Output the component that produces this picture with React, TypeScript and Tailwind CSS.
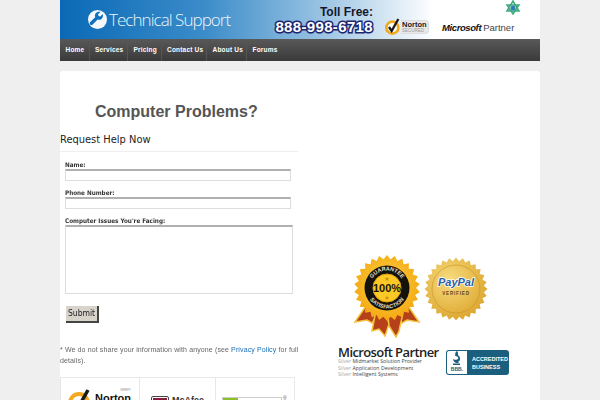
const sans = "font-['Liberation_Sans',Arial,sans-serif]";
const cond = "font-['DejaVu_Sans_Condensed','DejaVu_Sans',sans-serif]";

const navItems = [
  { label: "Home", w: "w-[29.5px]" },
  { label: "Services", w: "w-[38.5px]" },
  { label: "Pricing", w: "w-[33.5px]" },
  { label: "Contact Us", w: "w-[45.500px]" },
  { label: "About Us", w: "w-[40px]" },
  { label: "Forums", w: "w-[40px]" },
];

function starburst(cx: number, cy: number, outer: number, inner: number, n: number) {
  const pts: string[] = [];
  for (let i = 0; i < n * 2; i++) {
    const r = i % 2 === 0 ? outer : inner;
    const a = (Math.PI * i) / n;
    pts.push(`${(cx + r * Math.sin(a)).toFixed(2)},${(cy - r * Math.cos(a)).toFixed(2)}`);
  }
  return pts.join(" ");
}

function WrenchLogo() {
  return (
    <svg width="19" height="19" viewBox="0 0 24 24" className="shrink-0">
      <circle cx="12" cy="12" r="12" fill="#f4f8fc" />
      <path
        d="M18.6 5.2l-3 3-2.3-.6-.6-2.2 3-3c-2.300-.7-4.700 0-6 1.800-1.100 1.500-1.200 3.300-.6 4.800l-6.300 6.300c-.9.9-.9 2.300 0 3.100.9.9 2.300.9 3.100 0l6.300-6.300c1.600.6 3.500.4 4.900-.8 1.700-1.400 2.300-3.800 1.500-6.100z"
        fill="#1170bb"
      />
    </svg>
  );
}

function NortonCheck({ size = 17 }: { size?: number }) {
  return (
    <svg width={size} height={size} viewBox="0 0 24 24" className="shrink-0 overflow-visible">
      <circle cx="11" cy="13" r="9" fill="#fff" stroke="#f2a91f" strokeWidth="4" />
      <path d="M6 12l4 6L20 0" fill="none" stroke="#1a1a1a" strokeWidth="3.500" />
    </svg>
  );
}

function GuaranteeSeal() {
  return (
    <svg width="70" height="86" viewBox="0 0 70 86">
      <defs>
        <radialGradient id="gold" cx="50%" cy="45%" r="60%">
          <stop offset="0%" stopColor="#ffd84a" />
          <stop offset="100%" stopColor="#f2a20c" />
        </radialGradient>
      </defs>
      <path d="M16 48L3 67l12-2 5 3 7-10z" fill="#b5401a" stroke="#f3c23c" strokeWidth="1.500" />
      <path d="M54 48l13 19-12-2-5 3-7-10z" fill="#b5401a" stroke="#f3c23c" strokeWidth="1.500" />
      <path d="M24 55l-4 21 7-2 6 7 4-12-3-12z" fill="#b5401a" stroke="#f3c23c" strokeWidth="1.500" />
      <path d="M36 60l1 11 7 11 3-6 4-18z" fill="#b5401a" stroke="#f3c23c" strokeWidth="1.500" />
      <polygon points={starburst(35, 33, 33, 29, 26)} fill="url(#gold)" />
      <circle cx="35" cy="33" r="22.500" fill="#15120c" />
      <circle cx="35" cy="33" r="14" fill="#fdc926" stroke="#e0a011" strokeWidth="1" />
      <path id="gTop" d="M17.500 33a17.500 17.500 0 0 1 35 0" fill="none" />
      <path id="gBot" d="M14.500 33a20.500 20.500 0 0 0 41 0" fill="none" />
      <text fontSize="5.500" fontWeight="700" fill="#e8e0c8" fontFamily="Liberation Sans, sans-serif" textAnchor="middle">
        <textPath href="#gTop" startOffset="50%">GUARANTEE</textPath>
      </text>
      <text fontSize="5.500" fontWeight="700" fill="#e8e0c8" fontFamily="Liberation Sans, sans-serif" textAnchor="middle">
        <textPath href="#gBot" startOffset="50%">SATISFACTION</textPath>
      </text>
      <text x="35" y="37" fontSize="11" fontWeight="700" fill="#1b1305" textAnchor="middle" fontFamily="Liberation Sans, sans-serif">100%</text>
      <polygon points={starburst(35, 24, 2.500, 1, 5)} fill="#c98c10" />
      <polygon points={starburst(35, 43, 2.500, 1, 5)} fill="#c98c10" />
    </svg>
  );
}

function PayPalSeal() {
  return (
    <svg width="64" height="64" viewBox="0 0 64 64">
      <defs>
        <radialGradient id="paygold" cx="40%" cy="35%" r="75%">
          <stop offset="0%" stopColor="#f7dc7e" />
          <stop offset="100%" stopColor="#d99f25" />
        </radialGradient>
      </defs>
      <polygon points={starburst(32, 32, 31.500, 28, 28)} fill="url(#paygold)" />
      <circle cx="32" cy="32" r="24" fill="none" stroke="#c8901f" strokeWidth=".6" />
      <text x="32" y="29" fontSize="11" fontWeight="700" fontStyle="italic" textAnchor="middle" fill="#2b5ea8" stroke="#fff" strokeWidth="1.500" paintOrder="stroke" fontFamily="Liberation Sans, sans-serif">PayPal</text>
      <text x="32" y="38" fontSize="4.600" fontWeight="700" textAnchor="middle" letterSpacing=".8" fill="#5c4a25" fontFamily="Liberation Sans, sans-serif">VERIFIED</text>
    </svg>
  );
}

function BBBBadge() {
  return (
    <div className="flex h-[25px] w-[63px] rounded-[3px] bg-[#1a5f7d] p-px">
      <div className="flex w-[21px] flex-col items-center rounded-l-[2px] bg-white text-[#1a5f7d]">
        <svg width="11" height="15" viewBox="0 0 11 15">
          <path d="M6 0C3 2 5 4 4 5c2 0 4 1 3 3-1 1-4 1-5 0 0 2 2 4 4 4h2l-1-1c2-1 3-4 1-6C6 4 8 2 6 0z" fill="#1a5f7d" />
          <rect x="2" y="12.500" width="7" height="1.500" fill="#1a5f7d" />
        </svg>
        <span className={`${sans} text-[5px] font-bold leading-[6px]`}>BBB.</span>
      </div>
      <div className={`${sans} pl-[5px] pt-1 text-[5.5px] font-bold leading-[8px] text-white`}>
        ACCREDITED
        <br />
        BUSINESS
      </div>
    </div>
  );
}

function MicrosoftPartner() {
  const rows = [
    ["Silver", "Midmarket Solution Provider"],
    ["Silver", "Application Development"],
    ["Silver", "Intelligent Systems"],
  ];
  return (
    <div className="w-[101px] font-['Open_Sans',sans-serif]">
      <div className="whitespace-nowrap text-[13px] font-semibold leading-[12px] tracking-[-.6px] text-[#222]">Microsoft Partner</div>
      {rows.map(([a, b]) => (
        <div key={b} className="whitespace-nowrap text-[5.2px] leading-[6.7px] text-[#444]">
          <span className="text-[#aaa]">{a}</span> {b}
        </div>
      ))}
    </div>
  );
}

export default function App() {
  return (
    <div className="h-[400px] overflow-hidden bg-[#efefef]">
      <div className="mx-auto w-[480px]">
        {/* banner */}
        <header className="flex h-[39px] items-center bg-[linear-gradient(90deg,#0a69b6_0%,#3b8cc9_30%,#8fbde0_52%,#d5e6f3_68%,#ffffff_78%)]">
          <div className="ml-[28px] flex w-[187px] items-center gap-[2px]">
            <WrenchLogo />
            <span className="font-['Open_Sans',sans-serif] text-[17px] font-light tracking-[-.95px] text-[#eef5fb]">Technical Support</span>
          </div>
          <div className={`${sans} flex w-[98px] flex-col items-end pt-px`}>
            <span className="text-[12px] font-bold leading-[13px] text-[#15172c]">Toll Free:</span>
            <span className="whitespace-nowrap text-[15px] font-bold leading-[15px] tracking-[.35px] text-white [-webkit-text-stroke:3px_#1d2570] [paint-order:stroke_fill]">888-998-6718</span>
          </div>
          <div className="mb-[4px] ml-[12px] flex h-[17px] w-[43px] items-center self-end">
            <NortonCheck size={16} />
            <div className={`${sans} rounded-r-[4px] border border-l-0 border-[#ddd] bg-[#e8e8e8] px-px text-[7.5px] font-bold leading-[7px] text-[#222]`}>
              Norton
              <div className="text-[4.5px] font-normal leading-[5px] text-[#999]">SECURED</div>
            </div>
          </div>
          <div className="relative ml-[14px] whitespace-nowrap pt-[11px]">
            <svg width="16" height="15" viewBox="0 0 16 15" className="absolute left-[63px] top-[-2px]">
              <path d="M2 11L8 1l6 10z M2 5h12L8 14z" fill="none" stroke="#3aa97a" strokeWidth="1.500" />
              <circle cx="8" cy="8" r="2.500" fill="#2e7fb0" />
            </svg>
            <span className={`${sans} text-[9.500px] font-bold italic tracking-[-.4px] text-[#111]`}>Microsoft</span>
            <span className={`${sans} ml-[2px] text-[9.500px] text-[#444]`}>Partner</span>
          </div>
        </header>

        {/* nav */}
        <nav className="flex h-[22px] items-stretch bg-[linear-gradient(180deg,#595959_0%,#3a3a3a_100%)]">
          {navItems.map((item) => (
            <a key={item.label} className={`${sans} ${item.w} flex items-center whitespace-nowrap border-r border-[#555] pl-[5.5px] text-[6.5px] font-bold tracking-[.2px] text-white last:border-r-0`}>
              {item.label}
            </a>
          ))}
        </nav>

        {/* content */}
        <main className="mt-[10px] flex h-[340px] rounded-t-[3px] bg-white">
          <section className="w-[238px] shrink-0">
            <h1 className={`${sans} pl-[35px] pt-[30px] text-[16px] font-bold leading-[21px] text-[#555]`}>Computer Problems?</h1>
            <h2 className={`${cond} mt-[11px] border-b border-[#eee] pb-[4px] text-[11px] leading-[14px] text-[#222]`}>Request Help Now</h2>

            <form className={`${cond} pl-[5px] will-change-transform`}>
              <label className="mt-[8px] block text-[6.3px] font-bold leading-[9px] text-[#333]">Name:</label>
              <input className="block h-[12px] w-[226px] border border-[#ddd] border-t-2 border-t-[#b0b0b0] bg-white" />
              <label className="mt-[7px] block text-[6.3px] font-bold leading-[9px] text-[#333]">Phone Number:</label>
              <input className="block h-[12px] w-[226px] border border-[#ddd] border-t-2 border-t-[#b0b0b0] bg-white" />
              <label className="mt-[7px] block text-[6.3px] font-bold leading-[9px] text-[#333]">Computer Issues You&apos;re Facing:</label>
              <textarea className="block h-[69px] w-[228px] resize-none border border-[#ddd] border-t-2 border-t-[#b0b0b0] bg-white" />
              <button type="button" className="ml-px mt-[12px] block h-[17px] w-[33px] border-b-2 border-r-2 border-[#444] bg-[#d8d4cc] text-[8.5px] leading-[15px] text-[#222]">Submit</button>
            </form>

            <p className={`${sans} mt-[21px] whitespace-nowrap text-[7px] leading-[11px] tracking-[.12px] text-[#666] will-change-transform`}>
              * We do not share your information with anyone (see <a className="font-medium text-[#1a6db5]">Privacy Policy</a> for full
              <br />
              details).
            </p>

            <div className="mt-[11px] flex h-[40px] w-[235px] border border-[#e8e8e8]">
              <div className="flex w-[79px] items-start border-r border-[#e8e8e8] pl-[7px] pt-[12px]">
                <NortonCheck size={24} />
                <div className={`${sans} ml-[3px] mt-[-2px] text-[11px] font-bold leading-[12px] text-[#111]`}>
                  <div className="text-right text-[3px] font-normal leading-[4px] text-[#888]">VERIFY</div>
                  Norton
                </div>
              </div>
              <div className="flex w-[76px] items-start border-r border-[#e8e8e8] pl-[11px] pt-[18px]">
                <div className="flex h-[8px] w-[18px] rounded-t-[2px] border border-[#444] bg-white p-px">
                  <div className="flex-1 bg-[#8a1c3a]" />
                </div>
                <span className={`${sans} ml-[3px] text-[9px] font-bold leading-[8px] text-[#333]`}>McAfee</span>
              </div>
              <div className="relative pl-[6px] pt-[19px]">
                <div className="flex h-[8px] w-[60px] border border-[#ccc]">
                  <div className="w-[15px] bg-[#8cbf2a]" />
                </div>
                <span className={`${sans} absolute left-[67px] top-[17px] text-[5px] text-[#555]`}>®</span>
              </div>
            </div>
          </section>

          <aside className="flex-1 pl-[40px] pt-[184px]">
            <div className="flex items-start gap-[2px] pl-[14px]">
              <GuaranteeSeal />
              <div className="pt-[2px]"><PayPalSeal /></div>
            </div>
            <div className="mt-[5px] flex items-start gap-[7px]">
              <MicrosoftPartner />
              <div className="pt-[4px]"><BBBBadge /></div>
            </div>
          </aside>
        </main>
      </div>
    </div>
  );
}
